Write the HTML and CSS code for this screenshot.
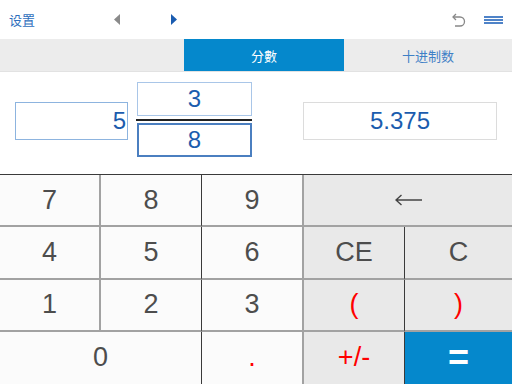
FILE: index.html
```html
<!DOCTYPE html>
<html lang="zh">
<head>
  <title>分數計算器</title>
  <link rel="stylesheet" href="styles.css">
</head>
<body>
  <div class="app">
    <div class="topbar">
      <span class="settings">设置</span>
      <div class="nav">
        <svg width="6" height="11" viewBox="0 0 6 11"><polygon points="6,0 6,11 0,5.5" fill="#8a8a8a"/></svg>
        <svg width="6" height="11" viewBox="0 0 6 11"><polygon points="0,0 0,11 6,5.5" fill="#1a5cb0"/></svg>
      </div>
      <div class="tools">
        <svg class="undo" width="16" height="14" viewBox="0 0 16 14">
          <path d="M3 4 H10 A4.5 4.5 0 0 1 10 13 H5" fill="none" stroke="#888" stroke-width="1.3"/>
          <path d="M6 1 L3 4 L6 7" fill="none" stroke="#888" stroke-width="1.3"/>
        </svg>
        <div class="menu"><span></span><span></span><span></span></div>
      </div>
    </div>

    <div class="tabs">
      <div class="tab blank"></div>
      <div class="tab active">分數</div>
      <div class="tab">十进制数</div>
    </div>

    <div class="display">
      <div class="box whole">5</div>
      <div class="fraction">
        <div class="box num">3</div>
        <div class="bar"></div>
        <div class="box den">8</div>
      </div>
      <div class="box result">5.375</div>
    </div>

    <div class="keypad">
      <div class="key c1">7</div>
      <div class="key c2">8</div>
      <div class="key c3">9</div>
      <div class="key op wide">
        <svg width="27" height="12" viewBox="0 0 27 12">
          <path d="M1 6 H27 M6.5 1 L1 6 L6.5 11" fill="none" stroke="#444" stroke-width="1.4"/>
        </svg>
      </div>

      <div class="key c1">4</div>
      <div class="key c2">5</div>
      <div class="key c3">6</div>
      <div class="key op c4">CE</div>
      <div class="key op">C</div>

      <div class="key c1">1</div>
      <div class="key c2">2</div>
      <div class="key c3">3</div>
      <div class="key op c4 red">(</div>
      <div class="key op red">)</div>

      <div class="key zero">0</div>
      <div class="key c3 red">.</div>
      <div class="key op c4 red">+/-</div>
      <div class="key equals">=</div>
    </div>
  </div>
</body>
</html>
```

FILE: styles.css
```css
body {
  margin: 0;
  font-family: "Liberation Sans", Arial, "Noto Sans CJK SC", sans-serif;
  background: #fff;
}

.app {
  width: 512px;
  height: 384px;
  display: flex;
  flex-direction: column;
  overflow: hidden;
}

/* top bar */
.topbar {
  height: 39px;
  display: flex;
  align-items: center;
  padding: 0 9px;
  box-sizing: border-box;
}

.settings {
  width: 105px;
  font-size: 13px;
  color: #2f6fbd;
  font-family: "Noto Sans CJK SC", sans-serif;
}

.nav {
  display: flex;
  gap: 51px;
}

.tools {
  margin-left: auto;
  display: flex;
  align-items: center;
  gap: 18px;
}

.menu {
  display: flex;
  flex-direction: column;
  gap: 1px;
  width: 19px;
}

.menu span {
  height: 2px;
  background: #4f83c8;
}

/* tabs */
.tabs {
  height: 32px;
  display: grid;
  grid-template-columns: 184px 160px 1fr;
  background: #ececec;
  border-bottom: 1px solid #e2e2e2;
}

.tab {
  display: flex;
  align-items: center;
  justify-content: center;
  font-size: 13px;
  color: #3f80c6;
  font-family: "Noto Sans CJK SC", sans-serif;
}

.tab.active {
  background: #0588cc;
  color: #fff;
}

/* display */
.display {
  height: 102px;
  display: flex;
  align-items: flex-start;
  padding-left: 15px;
}

.box {
  box-sizing: border-box;
  display: flex;
  align-items: center;
  font-size: 24px;
  color: #1b5cae;
}

.whole {
  width: 113px;
  height: 38px;
  border: 1px solid #8db4df;
  justify-content: flex-end;
  padding-right: 1px;
  margin-top: 30px;
}

.fraction {
  width: 116px;
  margin: 10px 0 0 8px;
  display: flex;
  flex-direction: column;
  align-items: flex-end;
}

.num, .den {
  width: 115px;
  height: 34px;
  justify-content: center;
}

.num {
  border: 1px solid #a9c6e8;
}

.bar {
  width: 116px;
  height: 2px;
  background: #222;
  margin: 3px 0 2px;
}

.den {
  border: 2px solid #4b7fc0;
}

.result {
  width: 194px;
  height: 38px;
  margin: 30px 0 0 51px;
  border: 1px solid #dcdcdc;
  justify-content: center;
}

/* keypad */
.keypad {
  flex: 1;
  display: grid;
  grid-template-columns: 101px 101px 102px 101px 1fr;
  grid-template-rows: repeat(4, 1fr);
  border-top: 1px solid #3a3a3a;
}

.key {
  display: flex;
  align-items: center;
  justify-content: center;
  font-size: 27px;
  color: #4d4d4d;
  background: #fbfbfb;
  border-bottom: 2px solid #a2a2a2;
  box-sizing: border-box;
}

.c1 { border-right: 2px solid #a2a2a2; }
.c2 { border-right: 1px solid #3a3a3a; }
.c3 { border-right: 2px solid #a2a2a2; }
.c4 { border-right: 1px solid #3a3a3a; }

.op {
  background: #e9e9e9;
}

.wide {
  grid-column: span 2;
}

.zero {
  grid-column: span 2;
  border-right: 1px solid #3a3a3a;
}

.red {
  color: #f00;
}

.keypad .key:nth-last-child(-n+4) {
  border-bottom: none;
}

.equals {
  background: #0588cc;
  color: #fff;
  font-size: 36px;
  font-weight: bold;
}
```
